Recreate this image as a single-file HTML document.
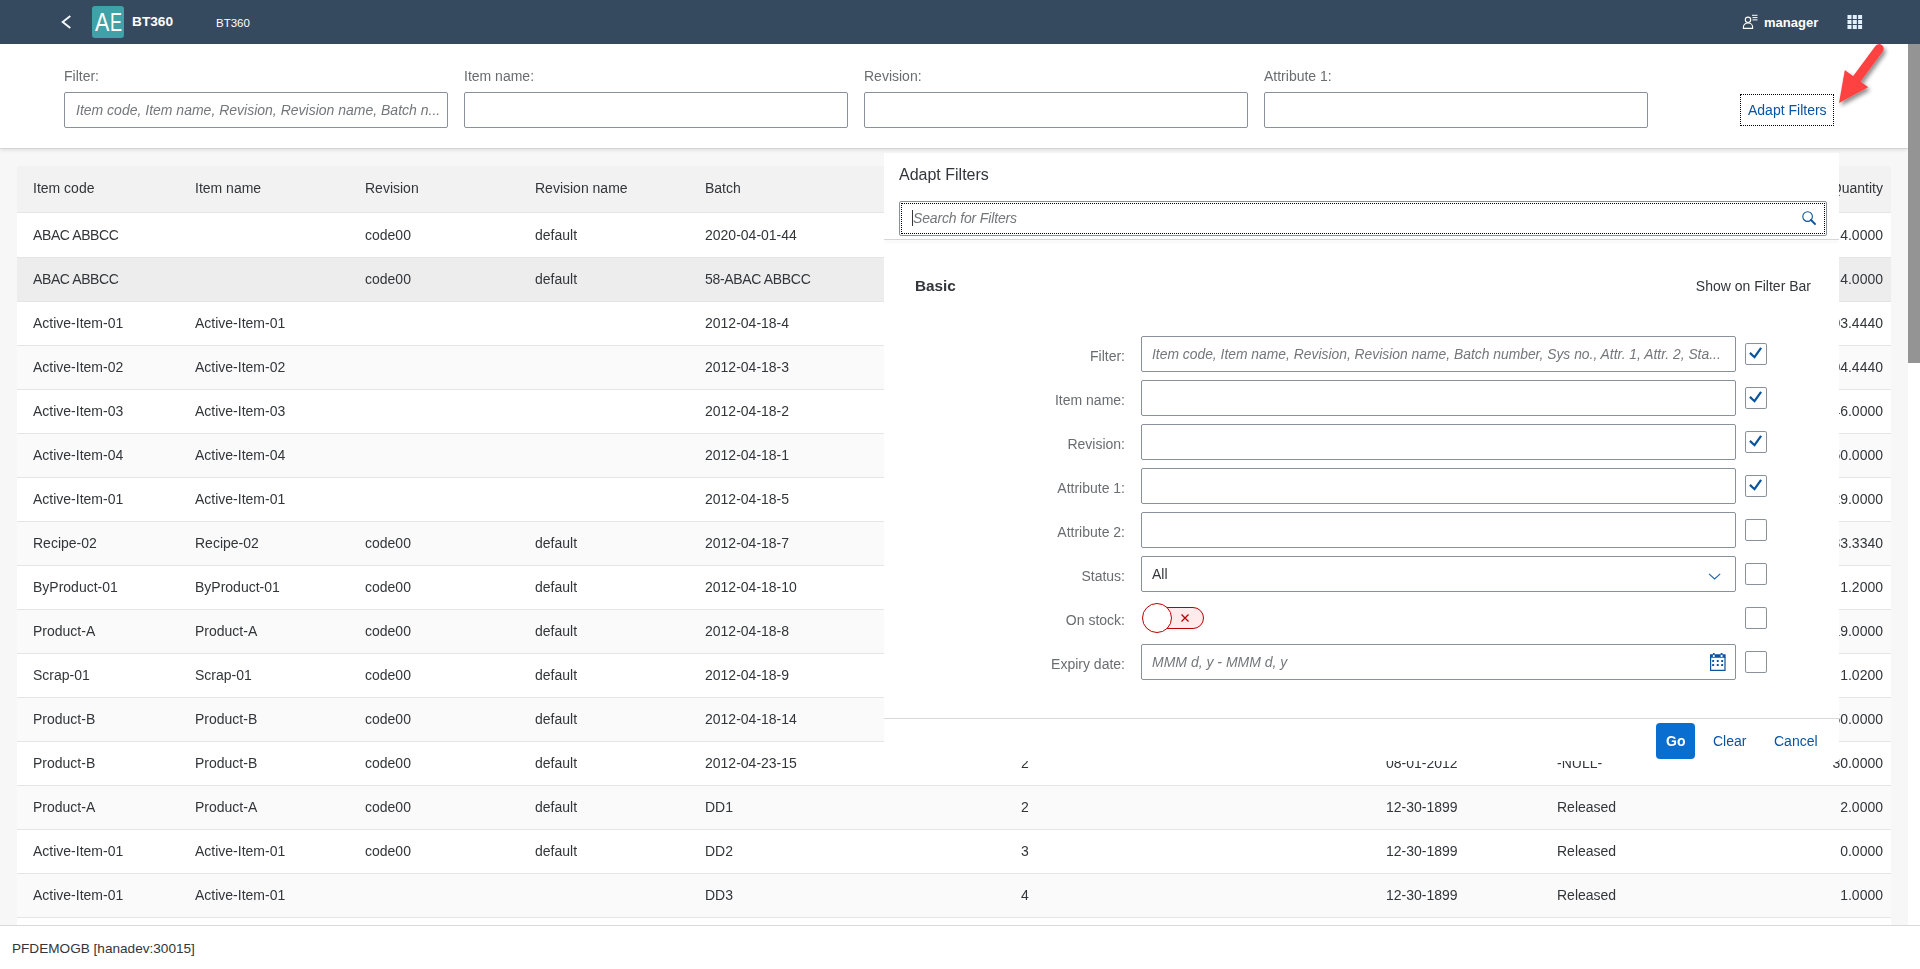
<!DOCTYPE html>
<html><head><meta charset="utf-8">
<style>
*{box-sizing:border-box;}
html,body{margin:0;padding:0;width:1920px;height:969px;overflow:hidden;background:#f7f7f7;font-family:"Liberation Sans",sans-serif;color:#32363a;}
.abs{position:absolute;}
#shell{position:absolute;left:0;top:0;width:1920px;height:44px;background:#354a5f;}
#shell .t{position:absolute;color:#fff;white-space:nowrap;}
#fbar{will-change:transform;position:absolute;left:0;top:44px;width:1908px;height:104px;background:#fff;box-shadow:0 1px 0 rgba(0,0,0,0.08),0 2px 4px rgba(0,0,0,0.1);}
.lbl{position:absolute;font-size:14px;color:#6a6d70;white-space:nowrap;}
.inp{position:absolute;height:36px;border:1px solid #89919a;border-radius:2px;background:#fff;}
.ph{position:absolute;font-size:14px;font-style:italic;color:#74777a;white-space:nowrap;}
#scroll{position:absolute;left:1908px;top:44px;width:12px;height:881px;background:#fff;}
#thumb{position:absolute;left:1908px;top:44px;width:12px;height:319px;background:#949494;}
#table{will-change:transform;position:absolute;left:17px;top:166px;width:1874px;height:759px;overflow:hidden;}
.row{position:absolute;left:0;width:1874px;height:44px;border-bottom:1px solid #e5e5e5;background:#fff;}
.row.alt{background:#fafafa;}
.row.hov{background:#ededed;}
.hdr{position:absolute;left:0;top:0;width:1874px;height:47px;background:#f2f2f2;border-bottom:1px solid #e5e5e5;}
.c{position:absolute;top:-1px;line-height:44px;font-size:14px;color:#32363a;white-space:nowrap;}
.hdr .c{top:-1px;line-height:46px;}
.r0 .c{top:0;}
.r{text-align:right;}
#footer{position:absolute;left:0;top:925px;width:1920px;height:44px;background:#fff;border-top:1px solid #d9d9d9;}
#pop{will-change:transform;position:absolute;left:884px;top:153px;width:955px;height:608px;background:#fff;}
.plbl{position:absolute;font-size:14px;color:#6a6d70;white-space:nowrap;text-align:right;}
.cb{position:absolute;width:22px;height:22px;border:1px solid #89919a;border-radius:2px;background:#fff;}
.link{color:#0854a0;}
</style></head>
<body>
<div id="shell">
  <svg class="abs" style="left:60px;top:14px" width="12" height="16" viewBox="0 0 12 16"><path d="M10.3 2 L2.7 8 L10.3 14" fill="none" stroke="#f4f8ff" stroke-width="1.9"/></svg>
  <div class="abs" style="left:92px;top:6px;width:32px;height:32px;background:#3fa2a8;border-radius:3px;"></div>
  <div class="t" style="left:94.5px;top:9px;font-size:25px;line-height:27px;transform:scaleX(0.86);transform-origin:0 0;">A</div><div class="t" style="left:109.5px;top:9px;font-size:25px;line-height:27px;transform:scaleX(0.72);transform-origin:0 0;">E</div>
  <div class="t" style="left:132px;top:14px;font-size:13.7px;font-weight:bold;line-height:16px;">BT360</div>
  <div class="t" style="left:216px;top:15.5px;font-size:11.5px;line-height:14px;">BT360</div>
  <div class="t" style="left:1764px;top:15px;font-size:13px;font-weight:bold;line-height:15px;">manager</div>
  <svg class="abs" style="left:1742px;top:14px" width="17" height="16" viewBox="0 0 17 16"><circle cx="6" cy="5.8" r="2.7" fill="none" stroke="#fff" stroke-width="1.1"/><path d="M1.4 14.4 V13 A4.6 4 0 0 1 10.6 13 V14.4 Z" fill="none" stroke="#fff" stroke-width="1.1"/><path d="M10 1.3 H15.5 M10.5 3.6 H15.5 M10.5 5.9 H15.5" stroke="#fff" stroke-width="1"/></svg>
  <svg class="abs" style="left:1846.5px;top:15px" width="16" height="14" viewBox="0 0 16 14"><g fill="#e3f0ff"><rect x="0.5" y="0" width="4" height="4"/><rect x="5.8" y="0" width="4" height="4"/><rect x="11.1" y="0" width="4" height="4"/><rect x="0.5" y="5" width="4" height="4"/><rect x="5.8" y="5" width="4" height="4"/><rect x="11.1" y="5" width="4" height="4"/><rect x="0.5" y="10" width="4" height="4"/><rect x="5.8" y="10" width="4" height="4"/><rect x="11.1" y="10" width="4" height="4"/></g></svg>
</div>
<div id="fbar">
  <div class="lbl" style="left:64px;top:24px;">Filter:</div>
  <div class="lbl" style="left:464px;top:24px;">Item name:</div>
  <div class="lbl" style="left:864px;top:24px;">Revision:</div>
  <div class="lbl" style="left:1264px;top:24px;">Attribute 1:</div>
  <div class="inp" style="left:64px;top:48px;width:384px;"></div>
  <div class="ph" style="left:76px;top:58px;">Item code, Item name, Revision, Revision name, Batch n...</div>
  <div class="inp" style="left:464px;top:48px;width:384px;"></div>
  <div class="inp" style="left:864px;top:48px;width:384px;"></div>
  <div class="inp" style="left:1264px;top:48px;width:384px;"></div>
  <div class="abs" style="left:1740px;top:50px;width:94px;height:32px;border:1px dotted #000;"></div>
  <div class="abs link" style="left:1748px;top:58px;font-size:14px;white-space:nowrap;">Adapt Filters</div>
</div>
<div id="scroll"></div><div id="thumb"></div>
<div id="table">
<div class="hdr">
<div class="c" style="left:16px">Item code</div>
<div class="c" style="left:178px">Item name</div>
<div class="c" style="left:348px">Revision</div>
<div class="c" style="left:518px">Revision name</div>
<div class="c" style="left:688px">Batch</div>
<div class="c r" style="right:8px">Quantity</div>
</div>
<div class="row r0" style="top:47px;height:45px;">
<div class="c" style="left:16px;letter-spacing:-0.4px">ABAC ABBCC</div>
<div class="c" style="left:348px">code00</div>
<div class="c" style="left:518px">default</div>
<div class="c" style="left:688px">2020-04-01-44</div>
<div class="c r" style="right:8px">4.0000</div>
</div>
<div class="row hov" style="top:92px">
<div class="c" style="left:16px;letter-spacing:-0.4px">ABAC ABBCC</div>
<div class="c" style="left:348px">code00</div>
<div class="c" style="left:518px">default</div>
<div class="c" style="left:688px;letter-spacing:-0.33px">58-ABAC ABBCC</div>
<div class="c r" style="right:8px">4.0000</div>
</div>
<div class="row" style="top:136px">
<div class="c" style="left:16px">Active-Item-01</div>
<div class="c" style="left:178px">Active-Item-01</div>
<div class="c" style="left:688px">2012-04-18-4</div>
<div class="c r" style="right:8px">103.4440</div>
</div>
<div class="row alt" style="top:180px">
<div class="c" style="left:16px">Active-Item-02</div>
<div class="c" style="left:178px">Active-Item-02</div>
<div class="c" style="left:688px">2012-04-18-3</div>
<div class="c r" style="right:8px">104.4440</div>
</div>
<div class="row" style="top:224px">
<div class="c" style="left:16px">Active-Item-03</div>
<div class="c" style="left:178px">Active-Item-03</div>
<div class="c" style="left:688px">2012-04-18-2</div>
<div class="c r" style="right:8px">46.0000</div>
</div>
<div class="row alt" style="top:268px">
<div class="c" style="left:16px">Active-Item-04</div>
<div class="c" style="left:178px">Active-Item-04</div>
<div class="c" style="left:688px">2012-04-18-1</div>
<div class="c r" style="right:8px">50.0000</div>
</div>
<div class="row" style="top:312px">
<div class="c" style="left:16px">Active-Item-01</div>
<div class="c" style="left:178px">Active-Item-01</div>
<div class="c" style="left:688px">2012-04-18-5</div>
<div class="c r" style="right:8px">29.0000</div>
</div>
<div class="row alt" style="top:356px">
<div class="c" style="left:16px">Recipe-02</div>
<div class="c" style="left:178px">Recipe-02</div>
<div class="c" style="left:348px">code00</div>
<div class="c" style="left:518px">default</div>
<div class="c" style="left:688px">2012-04-18-7</div>
<div class="c r" style="right:8px">33.3340</div>
</div>
<div class="row" style="top:400px">
<div class="c" style="left:16px">ByProduct-01</div>
<div class="c" style="left:178px">ByProduct-01</div>
<div class="c" style="left:348px">code00</div>
<div class="c" style="left:518px">default</div>
<div class="c" style="left:688px">2012-04-18-10</div>
<div class="c r" style="right:8px">1.2000</div>
</div>
<div class="row alt" style="top:444px">
<div class="c" style="left:16px">Product-A</div>
<div class="c" style="left:178px">Product-A</div>
<div class="c" style="left:348px">code00</div>
<div class="c" style="left:518px">default</div>
<div class="c" style="left:688px">2012-04-18-8</div>
<div class="c r" style="right:8px">19.0000</div>
</div>
<div class="row" style="top:488px">
<div class="c" style="left:16px">Scrap-01</div>
<div class="c" style="left:178px">Scrap-01</div>
<div class="c" style="left:348px">code00</div>
<div class="c" style="left:518px">default</div>
<div class="c" style="left:688px">2012-04-18-9</div>
<div class="c r" style="right:8px">1.0200</div>
</div>
<div class="row alt" style="top:532px">
<div class="c" style="left:16px">Product-B</div>
<div class="c" style="left:178px">Product-B</div>
<div class="c" style="left:348px">code00</div>
<div class="c" style="left:518px">default</div>
<div class="c" style="left:688px">2012-04-18-14</div>
<div class="c r" style="right:8px">50.0000</div>
</div>
<div class="row" style="top:576px">
<div class="c" style="left:16px">Product-B</div>
<div class="c" style="left:178px">Product-B</div>
<div class="c" style="left:348px">code00</div>
<div class="c" style="left:518px">default</div>
<div class="c" style="left:688px">2012-04-23-15</div>
<div class="c" style="left:1004px">2</div>
<div class="c" style="left:1369px">08-01-2012</div>
<div class="c" style="left:1540px">-NULL-</div>
<div class="c r" style="right:8px">30.0000</div>
</div>
<div class="row alt" style="top:620px">
<div class="c" style="left:16px">Product-A</div>
<div class="c" style="left:178px">Product-A</div>
<div class="c" style="left:348px">code00</div>
<div class="c" style="left:518px">default</div>
<div class="c" style="left:688px">DD1</div>
<div class="c" style="left:1004px">2</div>
<div class="c" style="left:1369px">12-30-1899</div>
<div class="c" style="left:1540px">Released</div>
<div class="c r" style="right:8px">2.0000</div>
</div>
<div class="row" style="top:664px">
<div class="c" style="left:16px">Active-Item-01</div>
<div class="c" style="left:178px">Active-Item-01</div>
<div class="c" style="left:348px">code00</div>
<div class="c" style="left:518px">default</div>
<div class="c" style="left:688px">DD2</div>
<div class="c" style="left:1004px">3</div>
<div class="c" style="left:1369px">12-30-1899</div>
<div class="c" style="left:1540px">Released</div>
<div class="c r" style="right:8px">0.0000</div>
</div>
<div class="row alt" style="top:708px">
<div class="c" style="left:16px">Active-Item-01</div>
<div class="c" style="left:178px">Active-Item-01</div>
<div class="c" style="left:688px">DD3</div>
<div class="c" style="left:1004px">4</div>
<div class="c" style="left:1369px">12-30-1899</div>
<div class="c" style="left:1540px">Released</div>
<div class="c r" style="right:8px">1.0000</div>
</div>
<div class="row" style="top:752px">
</div>
</div>
<div id="footer"><div class="abs" style="left:12px;top:15px;font-size:13.6px;line-height:16px;white-space:nowrap;">PFDEMOGB [hanadev:30015]</div></div>
<div id="pop">
  <div class="abs" style="left:15px;top:12px;font-size:16px;line-height:20px;color:#32363a;white-space:nowrap;">Adapt Filters</div>
  <div class="abs" style="left:15px;top:47.5px;width:928px;height:35px;border:1px solid #89919a;border-radius:2px;background:#fff;"></div>
  <div class="abs" style="left:17px;top:49.5px;width:924px;height:31px;border:1px dotted #000;"></div>
  <div class="abs" style="left:28px;top:57px;width:1px;height:16px;background:#32363a;"></div>
  <div class="ph" style="left:29px;top:57px;line-height:16px;letter-spacing:-0.15px;">Search for Filters</div>
  <svg class="abs" style="left:918px;top:58px" width="14" height="14" viewBox="0 0 14 14"><circle cx="5.6" cy="5.6" r="4.8" fill="none" stroke="#0854a0" stroke-width="1.1"/><path d="M9 9 L13 13" stroke="#0854a0" stroke-width="1.8" stroke-linecap="round"/></svg>
  <div class="abs" style="left:0;top:86px;width:955px;height:1px;background:rgba(0,0,0,0.16);box-shadow:0 2px 3px rgba(0,0,0,0.08);"></div>
  <div class="abs" style="left:31px;top:124px;font-size:15.3px;font-weight:bold;line-height:18px;color:#32363a;white-space:nowrap;">Basic</div>
  <div class="abs" style="right:28px;top:125px;font-size:14px;line-height:16px;color:#32363a;white-space:nowrap;">Show on Filter Bar</div>
  <div class="plbl" style="right:714px;top:195px;line-height:16px;">Filter:</div>
  <div class="inp" style="left:257px;top:183px;width:595px;"></div>
  <div class="cb" style="left:861px;top:190px;"></div>
  <svg class="abs" style="left:861px;top:190px" width="22" height="22" viewBox="0 0 22 22"><path d="M4.9 9.9 L9.5 14.2 L16.1 4.8" fill="none" stroke="#0854a0" stroke-width="2.2"/></svg>
  <div class="plbl" style="right:714px;top:239px;line-height:16px;">Item name:</div>
  <div class="inp" style="left:257px;top:227px;width:595px;"></div>
  <div class="cb" style="left:861px;top:234px;"></div>
  <svg class="abs" style="left:861px;top:234px" width="22" height="22" viewBox="0 0 22 22"><path d="M4.9 9.9 L9.5 14.2 L16.1 4.8" fill="none" stroke="#0854a0" stroke-width="2.2"/></svg>
  <div class="plbl" style="right:714px;top:283px;line-height:16px;">Revision:</div>
  <div class="inp" style="left:257px;top:271px;width:595px;"></div>
  <div class="cb" style="left:861px;top:278px;"></div>
  <svg class="abs" style="left:861px;top:278px" width="22" height="22" viewBox="0 0 22 22"><path d="M4.9 9.9 L9.5 14.2 L16.1 4.8" fill="none" stroke="#0854a0" stroke-width="2.2"/></svg>
  <div class="plbl" style="right:714px;top:327px;line-height:16px;">Attribute 1:</div>
  <div class="inp" style="left:257px;top:315px;width:595px;"></div>
  <div class="cb" style="left:861px;top:322px;"></div>
  <svg class="abs" style="left:861px;top:322px" width="22" height="22" viewBox="0 0 22 22"><path d="M4.9 9.9 L9.5 14.2 L16.1 4.8" fill="none" stroke="#0854a0" stroke-width="2.2"/></svg>
  <div class="plbl" style="right:714px;top:371px;line-height:16px;">Attribute 2:</div>
  <div class="inp" style="left:257px;top:359px;width:595px;"></div>
  <div class="cb" style="left:861px;top:366px;"></div>
  <div class="plbl" style="right:714px;top:415px;line-height:16px;">Status:</div>
  <div class="inp" style="left:257px;top:403px;width:595px;"></div>
  <div class="cb" style="left:861px;top:410px;"></div>
  <div class="plbl" style="right:714px;top:459px;line-height:16px;">On stock:</div>
  <div class="cb" style="left:861px;top:454px;"></div>
  <div class="plbl" style="right:714px;top:503px;line-height:16px;">Expiry date:</div>
  <div class="inp" style="left:257px;top:491px;width:595px;"></div>
  <div class="cb" style="left:861px;top:498px;"></div>
  <div class="ph" style="left:268px;top:193px;line-height:16px;font-size:13.87px;">Item code, Item name, Revision, Revision name, Batch number, Sys no., Attr. 1, Attr. 2, Sta...</div>
  <div class="abs" style="left:268px;top:413px;font-size:14px;line-height:16px;color:#32363a;">All</div>
  <svg class="abs" style="left:824px;top:419.5px" width="14" height="8" viewBox="0 0 14 8"><path d="M1 0.8 L6.6 6 L12.2 0.8" fill="none" stroke="#1d62aa" stroke-width="1.1"/></svg>
  <div class="abs" style="left:270px;top:454px;width:50px;height:22px;border:1px solid #bb0000;border-radius:11px;background:#ffebeb;"></div>
  <div class="abs" style="left:258px;top:450px;width:30px;height:30px;border:1px solid #bb0000;border-radius:50%;background:#fff;"></div>
  <svg class="abs" style="left:297px;top:461px" width="8" height="8" viewBox="0 0 8 8"><path d="M0.5 0.5 L7.5 7.5 M7.5 0.5 L0.5 7.5" stroke="#bb0000" stroke-width="1.3"/></svg>
  <div class="ph" style="left:268px;top:501px;line-height:16px;">MMM d, y - MMM d, y</div>
  <svg class="abs" style="left:826px;top:500px" width="16" height="18" viewBox="0 0 16 18"><path d="M0.6 4 V17.4 H15 V4" fill="none" stroke="#0854a0" stroke-width="1.2"/><path d="M0 1.2 H15.6 V4.7 H0 Z M2.9 2 V3.9 H4.6 V2 Z M10.7 2 V3.9 H12.5 V2 Z" fill="#0854a0" fill-rule="evenodd"/><rect x="2.9" y="0" width="1.7" height="1.4" fill="#0854a0"/><rect x="10.7" y="0" width="1.8" height="1.4" fill="#0854a0"/><g fill="#0854a0"><rect x="2.1" y="7" width="2" height="2" rx="0.4"/><rect x="6.8" y="7" width="2" height="2" rx="0.4"/><rect x="11.1" y="7" width="2" height="2" rx="0.4"/><rect x="2.1" y="11.1" width="2" height="2" rx="0.4"/><rect x="6.8" y="11.1" width="2" height="2" rx="0.4"/><rect x="11.1" y="11.1" width="2" height="2" rx="0.4"/></g></svg>
  <div class="abs" style="left:0;top:565px;width:955px;height:1px;background:#d9d9d9;"></div>
  <div class="abs" style="left:772px;top:570px;width:39px;height:36px;background:#0a6ed1;border-radius:4px;"></div>
  <div class="abs" style="left:782px;top:580px;font-size:14px;font-weight:bold;line-height:16px;color:#fff;">Go</div>
  <div class="abs link" style="left:829px;top:580px;font-size:14px;line-height:16px;">Clear</div>
  <div class="abs link" style="left:890px;top:580px;font-size:14px;line-height:16px;">Cancel</div>
</div>
<svg class="abs" style="left:1820px;top:40px;z-index:5" width="80" height="80" viewBox="0 0 80 80">
<defs><filter id="sh" x="-30%" y="-30%" width="160%" height="160%"><feGaussianBlur in="SourceAlpha" stdDeviation="2"/><feOffset dx="2" dy="3" result="o"/><feComponentTransfer><feFuncA type="linear" slope="0.45"/></feComponentTransfer><feMerge><feMergeNode/><feMergeNode in="SourceGraphic"/></feMerge></filter></defs>
<g filter="url(#sh)"><path d="M59.1 8.7 L33 44" stroke="#fe4343" stroke-width="9.2" stroke-linecap="round"/><path d="M24.8 30 L19 62.9 L48.3 47.3 Z" fill="#fe4343"/></g></svg>
</body></html>
